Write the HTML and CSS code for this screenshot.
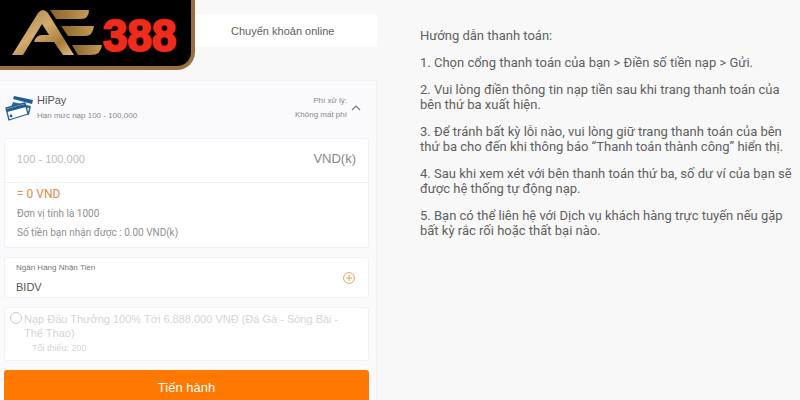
FILE: index.html
```html
<!DOCTYPE html>
<html lang="vi">
<head>
    <meta charset="UTF-8">
    <meta name="viewport" content="width=device-width, initial-scale=1.0">
    <title>AE388 - Nạp tiền</title>
    <link rel="stylesheet" href="styles.css">
</head>
<body>
    <a class="logo" href="#" aria-label="AE388">
        <svg class="logo-mark" viewBox="0 0 92 50" aria-hidden="true">
            <defs>
                <linearGradient id="gold" x1="0" y1="0" x2="1" y2="1">
                    <stop offset="0" stop-color="#a97c3c"/>
                    <stop offset="0.45" stop-color="#d2ac70"/>
                    <stop offset="0.75" stop-color="#a87b38"/>
                    <stop offset="1" stop-color="#e0bd86"/>
                </linearGradient>
                <linearGradient id="bar" x1="0" y1="0" x2="1" y2="0">
                    <stop offset="0" stop-color="#8a632b"/>
                    <stop offset="1" stop-color="#c59a55"/>
                </linearGradient>
            </defs>
            <path fill="url(#gold)" d="M1 47 27 5Q32-1 37 5L63 47H52L43 34H23Q25 27 31 27H38L31 16 12 47Z"/>
            <path fill="url(#bar)" d="M39 2H78Q78 11 70 11H45Z"/>
            <path fill="url(#bar)" d="M50 18H83Q82 28 74 28H57Z"/>
            <path fill="url(#bar)" d="M61 37H91Q90 47 80 47H67Z"/>
        </svg>
        <span class="logo-number">388</span>
    </a>

    <main class="page">
        <section class="deposit">
            <nav class="tabs">
                <button class="tab" type="button">Chuyển khoản online</button>
            </nav>

            <form class="panel">
                <div class="gateway">
                    <svg class="gateway-icon" viewBox="0 0 28 26" aria-hidden="true">
                        <path fill="#1f5c94" d="M9 1 28 5 27 9 8 4Z"/>
                        <path fill="#2f6799" d="M8 7 26 11 24 20 21 19 20 10 6 12Z"/>
                        <path fill="#fff" d="M22 13 24 13 23 17 21 16Z"/>
                        <path fill="#fff" stroke="#27608f" stroke-width="1.3" stroke-linejoin="round" d="M1 13 20 8 23 19 4 25Z"/>
                        <path fill="#1f5c94" d="M1 14 20 9 21 12 2 17Z"/>
                        <circle cx="6" cy="21" r="1.4" fill="#1f5c94"/>
                    </svg>
                    <div class="gateway-info">
                        <h2>HiPay</h2>
                        <p>Hạn mức nạp 100 - 100,000</p>
                    </div>
                    <p class="fee">Phí xử lý:<br>Không mất phí</p>
                    <button class="toggle" type="button" aria-label="Thu gọn">
                        <svg viewBox="0 0 10 6"><path d="M1 5 5 1 9 5" fill="none" stroke="#777" stroke-width="1.2"/></svg>
                    </button>
                </div>

                <div class="cards">
                    <div class="card">
                        <div class="amount">
                            <input id="amount" type="text" placeholder="100 - 100,000">
                            <label for="amount">VND(k)</label>
                        </div>
                        <div class="summary">
                            <p class="total">= 0 VND</p>
                            <p>Đơn vị tính là 1000</p>
                            <p>Số tiền bạn nhận được : 0.00 VND(k)</p>
                        </div>
                    </div>

                    <div class="card bank">
                        <div>
                            <p class="bank-label">Ngân Hàng Nhận Tiền</p>
                            <p class="bank-name">BIDV</p>
                        </div>
                        <button class="add" type="button" aria-label="Chọn ngân hàng">
                            <svg viewBox="0 0 12 12"><g fill="none" stroke="#eaa05a"><circle cx="6" cy="6" r="5.4"/><path d="M6 3V9M3 6H9"/></g></svg>
                        </button>
                    </div>

                    <div class="card bonus">
                        <input id="bonus" type="radio" name="bonus">
                        <div>
                            <label for="bonus">Nạp Đầu Thưởng 100% Tới 6.888.000 VNĐ (Đá Gà - Sòng Bài - Thể Thao)</label>
                            <p>Tối thiểu: 200</p>
                        </div>
                    </div>

                    <button class="submit" type="submit">Tiến hành</button>
                </div>
            </form>
        </section>

        <section class="guide">
            <p>Hướng dẫn thanh toán:</p>
            <p>1. Chọn cổng thanh toán của bạn &gt; Điền số tiền nạp &gt; Gửi.</p>
            <p>2. Vui lòng điền thông tin nạp tiền sau khi trang thanh toán của bên thứ ba xuất hiện.</p>
            <p>3. Để tránh bất kỳ lỗi nào, vui lòng giữ trang thanh toán của bên thứ ba cho đến khi thông báo “Thanh toán thành công” hiển thị.</p>
            <p>4. Sau khi xem xét với bên thanh toán thứ ba, số dư ví của bạn sẽ được hệ thống tự động nạp.</p>
            <p>5. Bạn có thể liên hệ với Dịch vụ khách hàng trực tuyến nếu gặp bất kỳ rắc rối hoặc thất bại nào.</p>
        </section>
    </main>
</body>
</html>
```

FILE: styles.css
```css
* {
    box-sizing: border-box;
}

body {
    margin: 0;
    height: 100vh;
    overflow: hidden;
    background: #f8f8f8;
    color: #606060;
    font-family: "Liberation Sans", Arial, sans-serif;
    font-size: 13px;
}

h2,
p {
    margin: 0;
    font-weight: normal;
}

button,
input {
    font-family: inherit;
}

button {
    border: none;
    padding: 0;
    background: none;
    cursor: pointer;
}

svg {
    display: block;
}

/* Logo lies over the top left corner */
.logo {
    position: absolute;
    top: 0;
    left: 0;
    z-index: 1;
    display: flex;
    padding: 8px 15px 8px 11px;
    background: #000;
    border: solid #96713f;
    border-width: 0 4px 4px 0;
    border-bottom-right-radius: 18px;
    text-decoration: none;
}

.logo-mark {
    width: 92px;
    height: 50px;
}

.logo-number {
    color: #ef2b1d;
    font-size: 44px;
    font-weight: bold;
    line-height: 56px;
    height: 46px;
    text-shadow: 0 0 3px #a00;
    -webkit-text-stroke: 2px #ef2b1d;
}

.page {
    display: grid;
    grid-template-columns: 377fr 423fr;
}

.tabs {
    display: flex;
    justify-content: flex-end;
    padding: 14px 0 33px;
}

.tab {
    width: 50%;
    height: 33px;
    background: #fff;
    color: #606060;
    font-size: 11px;
}

.panel {
    background: #fafafd;
    border: solid #f2f2f4;
    border-width: 1px 1px 0 0;
}

.gateway {
    display: flex;
    align-items: center;
    height: 57px;
    padding: 0 15px 4px 5px;
}

.gateway-icon {
    width: 28px;
    height: 26px;
}

.gateway-info {
    flex: 1;
    margin-left: 4px;
    color: #888;
    font-size: 8px;
    line-height: 16px;
}

.gateway-info h2 {
    color: #555;
    font-size: 11px;
}

.fee {
    color: #888;
    font-size: 8px;
    line-height: 14px;
    text-align: right;
}

.toggle {
    margin-left: 4px;
}

.toggle svg {
    width: 10px;
    height: 6px;
}

.cards {
    display: flex;
    flex-direction: column;
    gap: 9px;
    padding: 0 7px 0 4px;
}

.card {
    background: #fff;
    border: 1px solid #f1f1f4;
    border-radius: 3px;
}

.amount {
    display: flex;
    align-items: center;
    height: 44px;
    padding: 0 12px 4px;
    border-bottom: 1px solid #f1f1f3;
}

.amount input {
    flex: 1;
    min-width: 0;
    border: none;
    padding: 0;
    outline: none;
    font-size: 11px;
}

.amount input::placeholder {
    color: #bbb;
}

.amount label {
    color: #888;
    font-size: 13px;
}

.summary {
    padding: 2px 12px 5px;
    color: #909090;
    font-family: Roboto, Arial, sans-serif;
    font-size: 10px;
    line-height: 19px;
}

.summary .total {
    color: #e08b45;
    font-size: 12px;
}

.bank {
    display: flex;
    align-items: center;
    justify-content: space-between;
    padding: 0 13px 0 11px;
}

.bank-label {
    color: #777;
    font-size: 8px;
    line-height: 20px;
}

.bank-name {
    color: #555;
    font-size: 11px;
    line-height: 19px;
}

.add svg {
    width: 12px;
    height: 12px;
}

.bonus {
    display: flex;
    align-items: flex-start;
    padding: 4px 12px 4px 5px;
    color: #d5d5d5;
    font-size: 11px;
    line-height: 14px;
}

.bonus input {
    appearance: none;
    flex: none;
    width: 12px;
    height: 12px;
    margin: 0 2px 0 0;
    border: 1px solid #ccc;
    border-radius: 50%;
}

.bonus label {
    display: block;
}

.bonus p {
    padding-left: 8px;
    font-size: 9px;
    line-height: 16px;
}

.submit {
    height: 34px;
    background: #ff7900;
    border-radius: 3px;
    color: #fff;
    font-size: 13px;
}

.guide {
    padding: 28px 2px 0 43px;
    font-family: Roboto, Arial, sans-serif;
    line-height: 15px;
}

.guide p {
    margin-bottom: 12px;
}
```
